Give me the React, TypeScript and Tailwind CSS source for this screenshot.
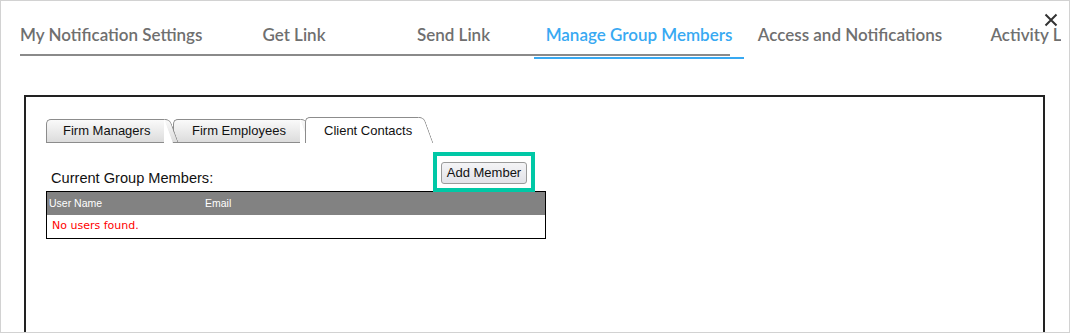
import React from "react"

const navTabs = [
  { label: "My Notification Settings", w: "w-[182px]" },
  { label: "Get Link", w: "w-[184px]" },
  { label: "Send Link", w: "w-[135px] mr-[13px]" },
  { label: "Manage Group Members", w: "w-[210px]", active: true },
  { label: "Access and Notifications", w: "w-[212px]" },
  { label: "Activity Log", w: "w-[158px]" },
]

function SubTab({
  label,
  active,
  cls,
  bodyCls,
}: {
  label: string
  active?: boolean
  cls: string
  bodyCls: string
}) {
  const bg = active ? "bg-white" : "bg-gradient-to-b from-[#fafafa] to-[#dcdcdc]"
  return (
    <div className={`relative flex ${active ? "h-[26px]" : "h-[24px]"} ${cls}`}>
      <div
        className={`flex items-center border-l border-t border-[#8c8c8c] rounded-tl-[5px] ${
          active ? "" : "border-b"
        } ${bg} ${bodyCls}`}
      >
        {label}
      </div>
      <div
        className={`w-[6px] border-t border-r border-[#8c8c8c] rounded-tr-[5px] skew-x-[20deg] origin-top ${
          active ? "" : "border-b"
        } ${bg}`}
      />
    </div>
  )
}

export default function App() {
  return (
    <div className="relative w-[1070px] h-[333px] overflow-hidden bg-white border border-[#d2d2d2]">
      {/* close */}
      <button className="absolute top-[12px] right-[11px] text-[#333]">
        <svg width="14" height="14" viewBox="0 0 14 14">
          <path d="M1.5 1.5L12.5 12.5M12.5 1.5L1.5 12.5" stroke="currentColor" strokeWidth="2" />
        </svg>
      </button>

      {/* top nav */}
      <div className="ml-[19px] mt-[24px] w-[1041px] overflow-hidden font-['Lato',sans-serif]">
        <div className="flex h-[29px] whitespace-nowrap">
          {navTabs.map(({ label, w, active }) => (
            <div
              key={label}
              className={`${w} shrink-0 text-center text-[17px] leading-[20px] font-semibold ${
                active ? "text-[#38a9f2]" : "text-[#6f6f6f]"
              }`}
            >
              {label}
            </div>
          ))}
        </div>
        <div className="w-[710px] h-[2px] bg-[#8a8a8a]" />
        <div className="ml-[514px] mt-[1px] w-[210px] h-[2px] bg-[#38a9f2]" />
      </div>

      {/* panel */}
      <div className="ml-[23px] mt-[36px] w-[1021px] h-[300px] border-2 border-b-0 border-[#222] pl-[20px] pt-[20px] font-['Liberation_Sans',Arial,sans-serif]">
        <div className="flex items-end text-[13px] text-[#111]">
          <SubTab label="Firm Managers" cls="z-20" bodyCls="w-[118px] pl-[16px]" />
          <SubTab label="Firm Employees" cls="z-10 ml-[3px]" bodyCls="w-[127px] pl-[18px]" />
          <SubTab label="Client Contacts" active cls="z-30 -ml-[1px]" bodyCls="w-[113px] pl-[18px]" />
        </div>

        <div className="flex w-[489px] items-end justify-between mt-[9px]">
          <span className="ml-[5px] mb-[5px] text-[14.6px] leading-[18px] text-[#111]">
            Current Group Members:
          </span>
          <div className="relative z-10 border-4 border-[#00c8a6] p-[4px] bg-white">
            <button className="h-[22px] w-[86px] rounded-[3px] border border-[#9a9a9a] bg-gradient-to-b from-[#f4f4f6] to-[#e2e2e8] text-[13px] text-[#111]">
              Add Member
            </button>
          </div>
        </div>

        <div className="-mt-[1px] w-[500px] border border-black">
          <div className="flex h-[23px] items-center bg-[#828282] text-[10.5px] text-white">
            <span className="w-[158px] pl-[2px]">User Name</span>
            <span>Email</span>
          </div>
          <div className="flex h-[23px] items-center pl-[5px] font-['DejaVu_Sans',Verdana,sans-serif] text-[11px] text-[#f00]">
            No users found.
          </div>
        </div>
      </div>
    </div>
  )
}
